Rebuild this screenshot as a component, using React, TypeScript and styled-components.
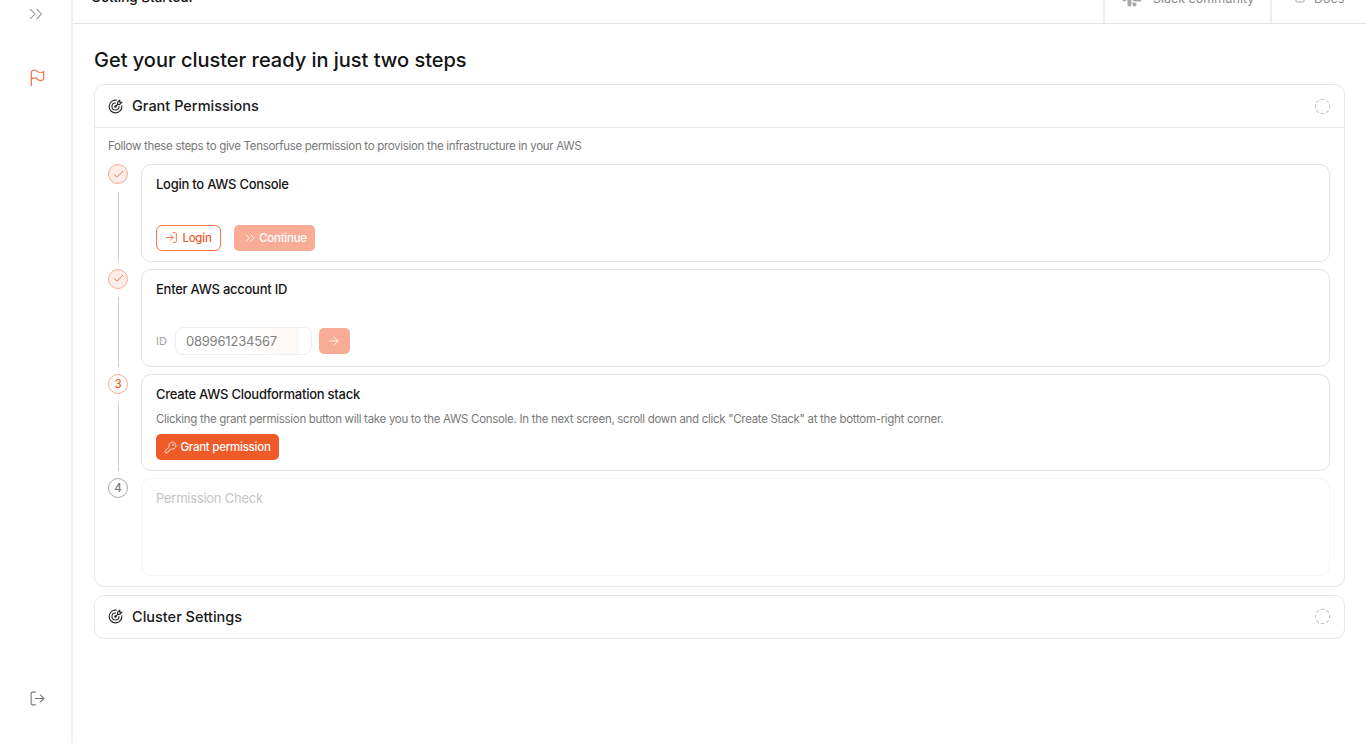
import React from "react";
import styled, { createGlobalStyle } from "styled-components";
import {
  ArrowRight,
  Check,
  ChevronsRight,
  CircleDashed,
  FileText,
  KeyRound,
  LogIn,
  LogOut,
} from "lucide-react";
import { FaSlack } from "react-icons/fa";
import { TbFlag, TbTargetArrow } from "react-icons/tb";

const ORANGE = "#f05a28";
const ORANGE_LINE = "#f4764e";
const ORANGE_SOFT = "#f8ac96";
const LINE = "#e8e8e8";

const GlobalStyle = createGlobalStyle`
  html, body {
    margin: 0;
    padding: 0;
    height: 100%;
    overflow: hidden;
    background: #fff;
    font-family: Inter, "Liberation Sans", sans-serif;
    color: #111;
  }
  * {
    box-sizing: border-box;
  }
`;

const Shell = styled.div`
  display: flex;
  height: 743px;
  overflow: hidden;
`;

const Sidebar = styled.aside`
  flex: 0 0 73px;
  display: flex;
  flex-direction: column;
  align-items: center;
  padding: 3px 0 36px;
  border-right: 2px solid #f0f0f0;
  color: #8d8d93;
`;

const Expand = styled.div`
  display: flex;
`;

const NavFlag = styled.div`
  display: flex;
  margin-top: 42px;
  margin-left: 3px;
  color: ${ORANGE_LINE};
`;

const NavBottom = styled.div`
  display: flex;
  margin-top: auto;
  margin-left: 3px;
  color: #77777d;
`;

const Main = styled.main`
  flex: 1;
  min-width: 0;
`;

const Header = styled.header`
  display: flex;
  align-items: stretch;
  height: 64px;
  margin-top: -40px;
  border-bottom: 1px solid #e2e2e2;
`;

const HeaderTitle = styled.div`
  flex: 1;
  align-self: center;
  padding: 10px 0 0 18px;
  font-size: 13.5px;
  line-height: 16px;
  font-weight: 500;
`;

const HeaderLink = styled.div<{ $width: number; $inset: number; $gap: number }>`
  display: flex;
  align-items: center;
  gap: ${({ $gap }) => $gap}px;
  width: ${({ $width }) => $width}px;
  padding: 14px 0 0 ${({ $inset }) => $inset}px;
  border-left: 2px solid #eeeeee;
  color: #8b8b8b;
  font-size: 12.5px;
  line-height: 16px;
`;

const HeaderIcon = styled.span`
  display: flex;
  margin-top: -4px;
  color: #a8a8a8;
`;

const Content = styled.div`
  padding: 23px 21px 0;
`;

const PageTitle = styled.h1`
  margin: 0 0 11px;
  font-size: 20px;
  line-height: 26px;
  letter-spacing: -0.02px;
  font-weight: 500;
  color: #141414;
`;

const Panel = styled.section`
  border: 1px solid ${LINE};
  border-radius: 10px;
  margin-bottom: 7.5px;
`;

const PanelHeader = styled.div<{ $open?: boolean }>`
  display: flex;
  align-items: center;
  height: ${({ $open }) => ($open ? 43 : 42)}px;
  padding: 0 13px 0 12px;
  border-bottom: ${({ $open }) => ($open ? `1px solid ${LINE}` : "none")};
`;

const PanelTitle = styled.h2`
  flex: 1;
  margin: -1px 0 0 8px;
  font-size: 14.5px;
  font-weight: 500;
  color: #1a1a1a;
`;

const PanelBody = styled.div`
  padding: 11px 14px 10.3px 13px;
`;

const Intro = styled.p`
  margin: 0 0 11.33px;
  font-size: 11.5px;
  line-height: 14px;
  letter-spacing: -0.31px;
  color: #777;
`;

const Steps = styled.div`
  display: flex;
  flex-direction: column;
  gap: 7px;
`;

const StepRow = styled.div`
  display: flex;
  gap: 13px;
`;

const Rail = styled.div`
  flex: 0 0 20px;
  display: flex;
  flex-direction: column;
  align-items: center;
`;

const Bullet = styled.div<{ $state: "done" | "active" | "idle" }>`
  display: flex;
  align-items: center;
  justify-content: center;
  width: 20px;
  height: 20px;
  border-radius: 50%;
  font-size: 11.5px;
  font-weight: 500;
  border: 1px solid
    ${({ $state }) => ($state === "idle" ? "#a8a8a8" : ORANGE_SOFT)};
  color: ${({ $state }) => ($state === "idle" ? "#777" : ORANGE)};
  background: ${({ $state }) => ($state === "done" ? "#fdeee9" : "#fff")};
`;

const RailLine = styled.div`
  width: 1px;
  flex: 1;
  margin: 8px 0 0;
  background: #cfcfcf;
`;

const StepCard = styled.div<{ $muted?: boolean }>`
  flex: 1;
  display: flex;
  flex-direction: column;
  height: 97.67px;
  padding: 11px 14px 10px;
  border: 1px solid ${({ $muted }) => ($muted ? "#f5f5f5" : "#e2e2e2")};
  border-radius: 10px;
`;

const StepTitle = styled.div<{ $muted?: boolean }>`
  font-size: 13px;
  line-height: 16px;
  letter-spacing: -0.25px;
  font-weight: ${({ $muted }) => ($muted ? 400 : 500)};
  color: ${({ $muted }) => ($muted ? "#c4c4c4" : "#161616")};
`;

const StepText = styled.p`
  margin: 10px 0 0;
  font-size: 11.5px;
  line-height: 14px;
  letter-spacing: -0.3px;
  color: #7a7a7a;
`;

const Actions = styled.div<{ $lift?: number }>`
  display: flex;
  align-items: center;
  margin-top: auto;
  margin-bottom: ${({ $lift }) => $lift ?? 0}px;
`;

const OutlineButton = styled.button`
  display: flex;
  align-items: center;
  justify-content: center;
  gap: 4px;
  height: 26px;
  width: 65px;
  padding: 0;
  margin-right: 13px;
  border: 1px solid ${ORANGE_LINE};
  border-radius: 6px;
  background: #fff;
  color: ${ORANGE};
  font: 500 11.5px Inter, sans-serif;
  letter-spacing: -0.25px;
`;

const SolidButton = styled.button<{ $soft?: boolean; $width: number; $gap?: number }>`
  display: flex;
  align-items: center;
  justify-content: center;
  gap: ${({ $gap }) => $gap ?? 3}px;
  height: 26px;
  width: ${({ $width }) => $width}px;
  padding: 0;
  border: none;
  border-radius: 5px;
  background: ${({ $soft }) => ($soft ? ORANGE_SOFT : ORANGE)};
  color: #fff;
  font: 500 11.5px Inter, sans-serif;
  letter-spacing: -0.25px;
`;

const FieldLabel = styled.span`
  margin-right: 8px;
  font-size: 11px;
  color: #a5a5a5;
`;

const IdField = styled.div`
  display: flex;
  align-items: center;
  width: 137px;
  height: 28px;
  padding-left: 10px;
  margin-right: 7px;
  border: 1px solid #efefef;
  border-radius: 8px;
  background: linear-gradient(90deg, #fff 55%, #fef6f3 90%, #fff 91%);
  font-size: 13px;
  letter-spacing: -0.2px;
  color: #808080;
`;

const steps = [
  { id: 1, title: "Login to AWS Console", state: "done" as const },
  { id: 2, title: "Enter AWS account ID", state: "done" as const },
  { id: 3, title: "Create AWS Cloudformation stack", state: "active" as const },
  { id: 4, title: "Permission Check", state: "idle" as const },
];

const StepBody: React.FC<{ id: number }> = ({ id }) => {
  if (id === 1) {
    return (
      <Actions>
        <OutlineButton>
          <LogIn size={13} strokeWidth={1.5} />
          Login
        </OutlineButton>
        <SolidButton $soft $width={81} $gap={1}>
          <ChevronsRight size={16} strokeWidth={1.25} />
          Continue
        </SolidButton>
      </Actions>
    );
  }
  if (id === 2) {
    return (
      <Actions $lift={1}>
        <FieldLabel>ID</FieldLabel>
        <IdField>089961234567</IdField>
        <SolidButton $soft $width={31}>
          <ArrowRight size={14} strokeWidth={1.5} />
        </SolidButton>
      </Actions>
    );
  }
  if (id === 3) {
    return (
      <>
        <StepText>
          Clicking the grant permission button will take you to the AWS Console.
          In the next screen, scroll down and click "Create Stack" at the
          bottom-right corner.
        </StepText>
        <Actions>
          <SolidButton $width={123}>
            <KeyRound size={13} strokeWidth={1.5} />
            Grant permission
          </SolidButton>
        </Actions>
      </>
    );
  }
  return null;
};

const PanelHead: React.FC<{ title: string; open?: boolean }> = ({ title, open }) => (
  <PanelHeader $open={open}>
    <TbTargetArrow size={17} color="#2a2a2a" strokeWidth={1.6} />
    <PanelTitle>{title}</PanelTitle>
    <CircleDashed size={17} strokeWidth={1.6} color="#c6c6c6" />
  </PanelHeader>
);

const App: React.FC = () => {
  return (
    <>
      <GlobalStyle />
      <Shell>
        <Sidebar>
          <Expand>
            <ChevronsRight size={22} strokeWidth={1.1} />
          </Expand>
          <NavFlag>
            <TbFlag size={21} strokeWidth={1.5} />
          </NavFlag>
          <NavBottom>
            <LogOut size={17} strokeWidth={1.5} />
          </NavBottom>
        </Sidebar>
        <Main>
          <Header>
            <HeaderTitle>Getting Started!</HeaderTitle>
            <HeaderLink $width={167} $inset={16} $gap={10}>
              <HeaderIcon>
                <FaSlack size={22} />
              </HeaderIcon>
              <span>Slack community</span>
            </HeaderLink>
            <HeaderLink $width={96} $inset={22} $gap={8}>
              <HeaderIcon>
                <FileText size={12} />
              </HeaderIcon>
              <span>Docs</span>
            </HeaderLink>
          </Header>
          <Content>
            <PageTitle>Get your cluster ready in just two steps</PageTitle>
            <Panel>
              <PanelHead title="Grant Permissions" open />
              <PanelBody>
                <Intro>
                  Follow these steps to give Tensorfuse permission to provision
                  the infrastructure in your AWS
                </Intro>
                <Steps>
                  {steps.map((step, index) => (
                    <StepRow key={step.id}>
                      <Rail>
                        <Bullet $state={step.state}>
                          {step.state === "done" ? (
                            <Check size={13} strokeWidth={1.5} />
                          ) : (
                            step.id
                          )}
                        </Bullet>
                        {index < steps.length - 1 && <RailLine />}
                      </Rail>
                      <StepCard $muted={step.state === "idle"}>
                        <StepTitle $muted={step.state === "idle"}>
                          {step.title}
                        </StepTitle>
                        <StepBody id={step.id} />
                      </StepCard>
                    </StepRow>
                  ))}
                </Steps>
              </PanelBody>
            </Panel>
            <Panel>
              <PanelHead title="Cluster Settings" />
            </Panel>
          </Content>
        </Main>
      </Shell>
    </>
  );
};

export default App;
